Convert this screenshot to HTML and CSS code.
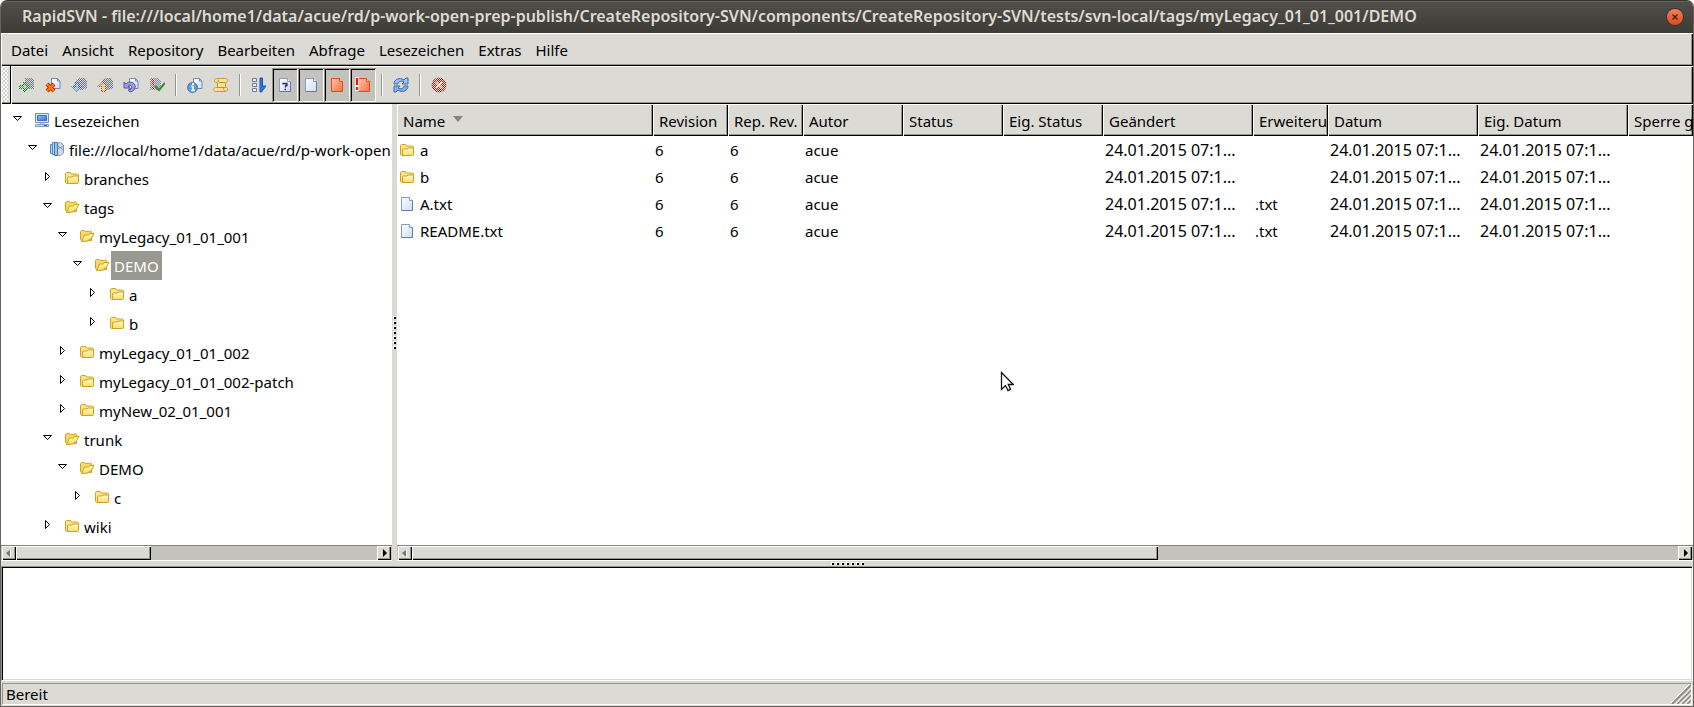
FILE: index.html
```html
<!DOCTYPE html>
<html lang="de">
<head>
<meta charset="utf-8">
<title>RapidSVN</title>
<link rel="stylesheet" href="styles.css">
</head>
<body>
<svg class="defs" aria-hidden="true">
  <defs>
    <linearGradient id="gFolder" x1="0" y1="0" x2="0" y2="1"><stop offset="0" stop-color="#fffbc4"/><stop offset="1" stop-color="#fbdc6c"/></linearGradient>
    <linearGradient id="gPage" x1="0" y1="0" x2="1" y2="1"><stop offset="0" stop-color="#ffffff"/><stop offset="1" stop-color="#cddcf7"/></linearGradient>
    <linearGradient id="gRed" x1="0" y1="0" x2="1" y2="1"><stop offset="0" stop-color="#ffc4a8"/><stop offset="1" stop-color="#ff7040"/></linearGradient>
    <linearGradient id="gBlue" x1="0" y1="0" x2="1" y2="1"><stop offset="0" stop-color="#8fc0f5"/><stop offset="1" stop-color="#2f74d8"/></linearGradient>
    <pattern id="dither" width="2" height="2" patternUnits="userSpaceOnUse"><path d="M0 0h1v1H0zM1 1h1v1H1z" fill="#dbdad5" shape-rendering="crispEdges"/></pattern>
    <symbol id="folder" viewBox="0 0 16 16">
      <path d="M1.5 12.5v-9l1-1h4l1 1.500h6l1 1v8l-1 .5h-11z" fill="#fbe68a" stroke="#d2a01c"/>
      <path d="M3.500 13.500v-6l.5-.5h4l1-1h5.500v6.500l-1 1z" fill="url(#gFolder)" stroke="#d2a01c"/>
    </symbol>
    <symbol id="open" viewBox="0 0 16 16">
      <path d="M1.500 11.500v-8l1-1h3l1 1h4l1-1 1 1v9l-9 .5z" fill="#f8d968" stroke="#d2a01c"/>
      <path d="M2.500 13.500l3-6.500h4l1-1.500h4.500l-3 5.500-2 .5-1 1.500z" fill="url(#gFolder)" stroke="#d2a01c"/>
    </symbol>
    <symbol id="page" viewBox="0 0 16 16">
      <path d="M2.500 1.500h8l3 3v10h-11z" fill="url(#gPage)" stroke="#8a9cc4"/>
      <path d="M13.500 4.500v10h-11" fill="none" stroke="#6478a0"/>
      <path d="M10.500 1.500v3h3" fill="#fff" stroke="#8a9cc4"/>
    </symbol>
    <symbol id="redpage" viewBox="0 0 16 16">
      <path d="M2.500 1.500h8l3 3v10h-11z" fill="url(#gRed)" stroke="#e0491c"/>
      <path d="M10.500 1.500v3h3" fill="#ffe0d0" stroke="#e0491c"/>
    </symbol>
    <symbol id="backpage" viewBox="0 0 16 16">
      <path d="M6.500 1.500h6l2.500 2.500v7.500h-8.500z" fill="url(#gPage)" stroke="#7488b4"/>
      <path d="M12.500 1.500v2.500h2.500" fill="none" stroke="#7488b4"/>
    </symbol>
    <symbol id="computer" viewBox="0 0 16 16">
      <path d="M1.500 1.500h13v9h-13z" fill="#dfe6f4" stroke="#7c8cb8"/>
      <path d="M3.500 3.500h9v5h-9z" fill="url(#gBlue)" stroke="#3c6cc8"/>
      <path d="M5.500 11h5M1.500 12.500h13v2h-13z" fill="#d4dcec" stroke="#8494bc"/>
      <path d="M10 13.500h3" stroke="#4d62a0"/>
    </symbol>
    <symbol id="repo" viewBox="0 0 16 16">
      <path d="M8.500 2.500l3-1 3 2.500v8l-3 2.500h-3z" fill="#cfd8e6" stroke="#8a98ae"/>
      <path d="M9 7.500l5-2M9 5l5 4" stroke="#8a98ae" fill="none"/>
      <path d="M1.500 3.500h2v9h-2z" fill="#b5d2f0" stroke="#5888bc"/>
      <path d="M3.500 1.500h3v12h-3z" fill="#b4d6f8" stroke="#5888bc"/>
      <path d="M5.500 1.500h3v13h-3z" fill="#9cc6f2" stroke="#4478b4"/>
    </symbol>
    <symbol id="arrowdown" viewBox="0 0 10 10"><path d="M.5 2.500h8l-4 4z" fill="#fff" stroke="#000"/></symbol>
    <symbol id="arrowright" viewBox="0 0 10 10"><path d="M2.500.5v8l4-4z" fill="#fff" stroke="#000"/></symbol>
    <symbol id="left" viewBox="0 0 10 10"><path d="M6 2v7l-4-4z" fill="#77766f"/><path d="M6.500 2v7" stroke="#fff"/></symbol>
    <symbol id="right" viewBox="0 0 10 10"><path d="M4 1v8l4-4z" fill="#000"/></symbol>
  </defs>
</svg>

<div class="window">
  <header class="titlebar">
    <h1 class="title">RapidSVN - file:///local/home1/data/acue/rd/p-work-open-prep-publish/CreateRepository-SVN/components/CreateRepository-SVN/tests/svn-local/tags/myLegacy_01_01_001/DEMO</h1>
    <button class="close" type="button" aria-label="Schließen"><svg viewBox="0 0 16 16"><path d="M5.500 5.500l5 5M10.500 5.500l-5 5" stroke="#4a2013" stroke-width="1.400"/></svg></button>
  </header>

  <nav class="menubar" aria-label="Menü">
    <button type="button">Datei</button>
    <button type="button">Ansicht</button>
    <button type="button">Repository</button>
    <button type="button">Bearbeiten</button>
    <button type="button">Abfrage</button>
    <button type="button">Lesezeichen</button>
    <button type="button">Extras</button>
    <button type="button">Hilfe</button>
  </nav>

  <div class="toolbar" role="toolbar" aria-label="Werkzeuge">
    <div class="handle"></div>
    <div class="tools">
      <button class="tool" type="button" disabled aria-label="Hinzufügen"><svg viewBox="0 0 16 16"><path d="M6 1h7l2 2v9H6z" fill="#707888"/><path d="M0 8h4V5h3v1l4 4-4 4v1H4v-3H0z" fill="#127a1c"/><path d="M2 9.500h3v-2l3 2.500-3 2.500v-2H2z" fill="#9ccc9c"/><rect width="16" height="16" fill="url(#dither)"/></svg></button>
      <button class="tool" type="button" aria-label="Löschen"><svg viewBox="0 0 16 16"><use href="#backpage"/><path d="M2 7l7 7M9 7l-7 7" stroke="#b83408" stroke-width="4"/><path d="M2 7l7 7M9 7l-7 7" stroke="#ff7a14" stroke-width="2"/></svg></button>
      <button class="tool" type="button" disabled aria-label="Aktualisieren"><svg viewBox="0 0 16 16"><path d="M5 3l4-2h5l2 3v7l-4 2H6z" fill="#6c7484"/><path d="M4 5h4l1 4h3l-6 6-6-6h3z" fill="#2450a8"/><path d="M5 7h2v4h2l-3 3-3-3h2z" fill="#90a8d8"/><rect width="16" height="16" fill="url(#dither)"/></svg></button>
      <button class="tool" type="button" disabled aria-label="Übertragen"><svg viewBox="0 0 16 16"><path d="M5 3l4-2h5l2 3v7l-4 2H6z" fill="#6c7484"/><path d="M6 4l6 6H9v5H4v-5H0z" fill="#a05008"/><path d="M6 6l3 3H8v5H5V9H3z" fill="#e8c088"/><rect width="16" height="16" fill="url(#dither)"/></svg></button>
      <button class="tool" type="button" aria-label="Rückgängig"><svg viewBox="0 0 16 16"><use href="#backpage"/><path d="M1 5v6h6L5 9c2-2 5 0 3 3l-3 1 2 2c7-1 7-10 0-10-2 0-3 1-4 2z" fill="#9c9ce8" stroke="#5454b4"/></svg></button>
      <button class="tool" type="button" disabled aria-label="Erledigt"><svg viewBox="0 0 16 16"><path d="M1 1h8l3 3v9H1z" fill="#8088a0"/><path d="M4 2v6M4 10v2" stroke="#d01010" stroke-width="2"/><rect width="16" height="16" fill="url(#dither)"/><path d="M6 9l4 4 6-7" fill="none" stroke="#338a33" stroke-width="2"/></svg></button>
      <span class="sep"></span>
      <button class="tool" type="button" aria-label="Info"><svg viewBox="0 0 16 16"><use href="#backpage"/><circle cx="5.500" cy="10.500" r="4.900" fill="#5c9cd8" stroke="#3470ac"/><path d="M4 9.500h2v4M4 13.500h4" fill="none" stroke="#fff" stroke-width="1.500"/><path d="M5 7h2" stroke="#fff" stroke-width="2"/></svg></button>
      <button class="tool" type="button" aria-label="Protokoll"><svg viewBox="0 0 16 16"><path d="M4.500 5.500h-2c-2-1-1-4 1-4h9c3 0 3 4 0 4v5h1c2 0 1 4-1 4h-10c-3 0-2-4 0-4h2z" fill="#f8e29a" stroke="#c89a38"/><path d="M4.500 5c1.500 0 1.500-2 0-2M12 5.500H6M4.500 10.500h7c-1.500 1-1 3 .5 3.500" fill="none" stroke="#c08c2c"/></svg></button>
      <span class="sep"></span>
      <button class="tool" type="button" aria-label="Rekursiv"><svg viewBox="0 0 16 16"><path d="M1.500 1.500h4v3h-4zM1.500 6.500h4v3h-4zM1.500 11.500h4v3h-4z" fill="#eef0f8" stroke="#7076a0"/><path d="M9 1h2.500v8H15l-4.500 6H9z" fill="#2c78e0" stroke="#1c54b4"/></svg></button>
      <button class="tool pressed" type="button" aria-pressed="true" aria-label="Unversioniert"><svg viewBox="0 0 16 16"><use href="#page"/><path d="M6 7.500V6.500h4v2H8.500v2M7.500 12.500h1.500" fill="none" stroke="#2c2c64" stroke-width="1.300"/></svg></button>
      <button class="tool pressed" type="button" aria-pressed="true" aria-label="Unverändert"><svg><use href="#page"/></svg></button>
      <button class="tool pressed" type="button" aria-pressed="true" aria-label="Geändert"><svg><use href="#redpage"/></svg></button>
      <button class="tool pressed" type="button" aria-pressed="true" aria-label="Konflikte"><svg viewBox="0 0 16 16"><use href="#redpage" x="1"/><path d="M0 0h4v14H0z" fill="#fff"/><path d="M2 1v7M2 10v3" stroke="#e81c08" stroke-width="2.400"/></svg></button>
      <span class="sep"></span>
      <button class="tool" type="button" aria-label="Neu laden"><svg viewBox="0 0 16 16"><path d="M1 7c0-5 6-7 10-4l2-2h2v6H9l2-2C8 3 5 5 5 7z" fill="#9cc0f0" stroke="#3c68b0"/><path d="M15 9c0 5-6 7-10 4l-2 2H1V9h6l-2 2c3 2 6 0 6-2z" fill="#84b0ec" stroke="#3c68b0"/></svg></button>
      <span class="sep"></span>
      <button class="tool" type="button" disabled aria-label="Stopp"><svg viewBox="0 0 16 16"><circle cx="8" cy="8" r="7.500" fill="#a02c14"/><rect width="16" height="16" fill="url(#dither)"/><path d="M5 5l6 6M11 5l-6 6" stroke="#f0e8e4" stroke-width="1.600"/></svg></button>
    </div>
  </div>

  <main class="panes">
    <section class="treepane">
      <ul class="tree" role="tree">
        <li><div class="node"><svg class="tw"><use href="#arrowdown"/></svg><svg class="ic"><use href="#computer"/></svg><span class="label">Lesezeichen</span></div>
          <ul>
            <li><div class="node"><svg class="tw"><use href="#arrowdown"/></svg><svg class="ic"><use href="#repo"/></svg><span class="label">file:///local/home1/data/acue/rd/p-work-open</span></div>
              <ul>
                <li><div class="node"><svg class="tw"><use href="#arrowright"/></svg><svg class="ic"><use href="#folder"/></svg><span class="label">branches</span></div></li>
                <li><div class="node"><svg class="tw"><use href="#arrowdown"/></svg><svg class="ic"><use href="#open"/></svg><span class="label">tags</span></div>
                  <ul>
                    <li><div class="node"><svg class="tw"><use href="#arrowdown"/></svg><svg class="ic"><use href="#open"/></svg><span class="label">myLegacy_01_01_001</span></div>
                      <ul>
                        <li><div class="node"><svg class="tw"><use href="#arrowdown"/></svg><svg class="ic"><use href="#open"/></svg><span class="label selected">DEMO</span></div>
                          <ul>
                            <li><div class="node"><svg class="tw"><use href="#arrowright"/></svg><svg class="ic"><use href="#folder"/></svg><span class="label">a</span></div></li>
                            <li><div class="node"><svg class="tw"><use href="#arrowright"/></svg><svg class="ic"><use href="#folder"/></svg><span class="label">b</span></div></li>
                          </ul>
                        </li>
                      </ul>
                    </li>
                    <li><div class="node"><svg class="tw"><use href="#arrowright"/></svg><svg class="ic"><use href="#folder"/></svg><span class="label">myLegacy_01_01_002</span></div></li>
                    <li><div class="node"><svg class="tw"><use href="#arrowright"/></svg><svg class="ic"><use href="#folder"/></svg><span class="label">myLegacy_01_01_002-patch</span></div></li>
                    <li><div class="node"><svg class="tw"><use href="#arrowright"/></svg><svg class="ic"><use href="#folder"/></svg><span class="label">myNew_02_01_001</span></div></li>
                  </ul>
                </li>
                <li><div class="node"><svg class="tw"><use href="#arrowdown"/></svg><svg class="ic"><use href="#open"/></svg><span class="label">trunk</span></div>
                  <ul>
                    <li><div class="node"><svg class="tw"><use href="#arrowdown"/></svg><svg class="ic"><use href="#open"/></svg><span class="label">DEMO</span></div>
                      <ul>
                        <li><div class="node"><svg class="tw"><use href="#arrowright"/></svg><svg class="ic"><use href="#folder"/></svg><span class="label">c</span></div></li>
                      </ul>
                    </li>
                  </ul>
                </li>
                <li><div class="node"><svg class="tw"><use href="#arrowright"/></svg><svg class="ic"><use href="#folder"/></svg><span class="label">wiki</span></div></li>
              </ul>
            </li>
          </ul>
        </li>
      </ul>
      <div class="scrollbar">
        <button class="step" type="button" aria-label="Nach links"><svg><use href="#left"/></svg></button>
        <div class="trough"><div class="thumb" style="width:37.500%"></div></div>
        <button class="step" type="button" aria-label="Nach rechts"><svg><use href="#right"/></svg></button>
      </div>
    </section>

    <div class="sash vertical" role="separator"><i></i><i></i><i></i><i></i><i></i><i></i><i></i></div>

    <section class="listpane">
      <div class="listview">
        <table class="list">
          <colgroup><col class="c-name"><col class="c-rev"><col class="c-rev"><col class="c-mid"><col class="c-mid"><col class="c-mid"><col class="c-date"><col class="c-rev"><col class="c-date"><col class="c-date"><col></colgroup>
          <thead><tr>
            <th><button type="button">Name<svg class="sort" viewBox="0 0 10 6"><path d="M0 0h10L5 6z" fill="#85847e"/></svg></button></th>
            <th><button type="button">Revision</button></th>
            <th><button type="button">Rep. Rev.</button></th>
            <th><button type="button">Autor</button></th>
            <th><button type="button">Status</button></th>
            <th><button type="button">Eig. Status</button></th>
            <th><button type="button">Geändert</button></th>
            <th><button type="button">Erweiteru</button></th>
            <th><button type="button">Datum</button></th>
            <th><button type="button">Eig. Datum</button></th>
            <th><button type="button">Sperre g</button></th>
          </tr></thead>
          <tbody>
            <tr><td><span class="entry"><svg class="ic"><use href="#folder"/></svg>a</span></td><td>6</td><td>6</td><td>acue</td><td></td><td></td><td class="date">24.01.2015 07:1...</td><td></td><td class="date">24.01.2015 07:1...</td><td class="date">24.01.2015 07:1...</td><td></td></tr>
            <tr><td><span class="entry"><svg class="ic"><use href="#folder"/></svg>b</span></td><td>6</td><td>6</td><td>acue</td><td></td><td></td><td class="date">24.01.2015 07:1...</td><td></td><td class="date">24.01.2015 07:1...</td><td class="date">24.01.2015 07:1...</td><td></td></tr>
            <tr><td><span class="entry"><svg class="ic"><use href="#page"/></svg>A.txt</span></td><td>6</td><td>6</td><td>acue</td><td></td><td></td><td class="date">24.01.2015 07:1...</td><td>.txt</td><td class="date">24.01.2015 07:1...</td><td class="date">24.01.2015 07:1...</td><td></td></tr>
            <tr><td><span class="entry"><svg class="ic"><use href="#page"/></svg>README.txt</span></td><td>6</td><td>6</td><td>acue</td><td></td><td></td><td class="date">24.01.2015 07:1...</td><td>.txt</td><td class="date">24.01.2015 07:1...</td><td class="date">24.01.2015 07:1...</td><td></td></tr>
          </tbody>
        </table>
      </div>
      <div class="scrollbar">
        <button class="step" type="button" aria-label="Nach links"><svg><use href="#left"/></svg></button>
        <div class="trough"><div class="thumb" style="width:58.900%"></div></div>
        <button class="step" type="button" aria-label="Nach rechts"><svg><use href="#right"/></svg></button>
      </div>
      <svg class="pointer" viewBox="0 0 14 21"><path d="M1.500 1.500v17l4-4 2.500 5 2.500-1.300-2.200-4.700h5z" fill="#fff" stroke="#111" stroke-width="1.300"/></svg>
    </section>
  </main>

  <div class="sash horizontal" role="separator"><i></i><i></i><i></i><i></i><i></i><i></i><i></i></div>

  <textarea class="console" readonly aria-label="Ausgabe"></textarea>

  <footer class="statusbar">
    <span>Bereit</span>
    <svg class="grip" viewBox="0 0 20 20"><path d="M1 20L20 1M6 20L20 6M11 20L20 11M16 20l4-4" stroke="#8d8c84" stroke-width="2"/><path d="M0 19L19 0M4.500 20L20 4.500M9.500 20L20 9.500M14.500 20L20 14.500" stroke="#fff"/></svg>
  </footer>
</div>
</body>
</html>
```
FILE: styles.css
```css
* { box-sizing: border-box; }

:root {
  --face: #dbdad5;
  --shade: #96958d;
  --trough: #c3c2bc;
}

body {
  margin: 0;
  background: #fff;
  color: #000;
  font: 15px/20px "Noto Sans", "Open Sans", sans-serif;
}

button {
  margin: 0;
  padding: 0;
  border: 0;
  background: none;
  color: inherit;
  font: inherit;
}

ul { margin: 0; padding: 0; list-style: none; }
svg { display: block; flex: none; }
.defs { position: absolute; width: 0; height: 0; }

.window {
  display: flex;
  flex-direction: column;
  height: 100vh;
  overflow: hidden;
  border: 1px solid #65645f;
  border-top: 0;
  border-radius: 7px 7px 0 0;
  background: var(--face);
}

/* Title bar */
.titlebar {
  display: flex;
  flex: none;
  align-items: center;
  justify-content: space-between;
  height: 33px;
  margin: 0 -1px;
  padding: 0 11px 0 22px;
  border-top: 1px solid #33322e;
  border-radius: 7px 7px 0 0;
  background: linear-gradient(#504f49, #3c3b37);
  box-shadow: inset 0 1px #66655f;
}

.title {
  overflow: hidden;
  margin: 0;
  padding-bottom: 2px;
  color: #dfdbd2;
  font-size: 16px;
  font-weight: 600;
  line-height: 22px;
  white-space: nowrap;
}

.close {
  width: 16px;
  height: 16px;
  border-radius: 50%;
  background: linear-gradient(#f4805a, #df4a1e);
  box-shadow: 0 0 0 1px #35342f;
}

/* Menu and tool bars */
.menubar, .toolbar, .list th button {
  box-shadow: inset 1px 1px #fff, inset -1px -1px #000, inset -2px -2px var(--shade);
}

.menubar {
  display: flex;
  flex: none;
  align-items: center;
  gap: 14px;
  height: 33px;
  padding: 0 10px;
}

.toolbar { display: flex; flex: none; height: 38px; }

.handle {
  width: 10px;
  padding: 1px 2px 2px 1px;
  border-right: 1px solid #000;
  background: repeating-conic-gradient(#fff 0 25%, #cfcec9 0 50%) 1px 1px / 4px 4px content-box;
}

.tools {
  display: flex;
  align-items: center;
  padding: 2px;
  border-left: 1px solid #fff;
}

.tool {
  display: grid;
  place-items: center;
  width: 26px;
  height: 34px;
}

.tool svg { width: 16px; height: 16px; }

.pressed {
  background: var(--trough);
  box-shadow: inset 1px 1px var(--shade), inset -1px -1px #fff, inset 2px 2px #000;
}

.sep {
  width: 2px;
  height: 22px;
  margin: 0 5px;
  border-right: 1px solid #fff;
  background: var(--shade);
}

/* Panes */
.panes { display: flex; flex: 1; min-height: 0; }

.treepane, .listpane {
  display: flex;
  flex-direction: column;
  min-width: 0;
  background: #fff;
}

.treepane { flex: 0 0 391px; }
.listpane { position: relative; flex: 1; }

.tree { flex: 1; overflow: hidden; padding-top: 2px; }
.tree ul { padding-left: 15px; }

.node {
  display: flex;
  align-items: center;
  height: 29px;
  padding-left: 12px;
}

.tw { width: 10px; height: 10px; margin: 0 11px 3px 0; }
.ic { width: 16px; height: 16px; }
.node .ic { margin-bottom: 1px; }

.label {
  overflow: hidden;
  min-width: 0;
  height: 29px;
  padding: 1px 3px 0;
  margin-left: 1px;
  line-height: 28px;
  white-space: nowrap;
}

.selected { background: #9a9991; color: #fff; }

/* Scroll bars */
.scrollbar {
  display: flex;
  flex: none;
  height: 16px;
  padding: 0 1px;
  border-top: 1px solid #85847c;
  border-bottom: 1px solid #fff;
  background: var(--trough);
}

.trough { flex: 1; }

.step, .thumb {
  height: 14px;
  background: var(--face);
  box-shadow: inset 1px 1px #fff, inset -1px -1px #000, inset -2px -2px var(--shade);
}

.step { display: grid; flex: none; place-items: center; width: 14px; }
.step svg { width: 10px; height: 10px; }

/* Splitters */
.sash { display: flex; flex: none; align-items: center; justify-content: center; gap: 2px; }
.vertical { flex-direction: column; width: 5px; }
.horizontal { height: 5px; }

.sash i {
  width: 3px;
  height: 3px;
  background: linear-gradient(#000, #000) 1px 1px / 2px 2px no-repeat #fff;
}

/* File list */
.listview { flex: 1; overflow: hidden; }

.list {
  width: 100%;
  table-layout: fixed;
  border-collapse: collapse;
}

.c-name { width: 256px; }
.c-rev { width: 75px; }
.c-mid { width: 100px; }
.c-date { width: 150px; }

.list th { height: 32px; padding: 0; font-weight: 400; }

.list th button {
  display: flex;
  align-items: center;
  overflow: hidden;
  width: 100%;
  height: 32px;
  padding: 1px 0 0 6px;
  background: var(--face);
  white-space: nowrap;
}

.sort { width: 10px; height: 6px; margin: 0 0 4px 8px; }

.list td {
  overflow: hidden;
  height: 27px;
  padding: 1px 2px 0;
  white-space: nowrap;
}

.list .date { font-size: 16px; }

.entry { display: flex; align-items: center; gap: 5px; }

.pointer {
  position: absolute;
  top: 267px;
  left: 603px;
  width: 14px;
  height: 21px;
}

/* Output and status */
.console {
  flex: none;
  display: block;
  width: 100%;
  height: 115px;
  border: 1px solid #fff;
  border-top-color: var(--shade);
  border-left-color: var(--shade);
  outline: 0;
  background: #fff;
  box-shadow: inset 1px 1px #000, inset -1px -1px var(--face);
  resize: none;
}

.statusbar {
  display: flex;
  flex: none;
  align-items: center;
  justify-content: space-between;
  height: 22px;
  margin: 2px 1px 1px;
  padding: 0 0 0 3px;
  border: 1px solid #fff;
  border-top-color: var(--shade);
  border-left-color: var(--shade);
}

.grip { width: 20px; height: 20px; }
```
